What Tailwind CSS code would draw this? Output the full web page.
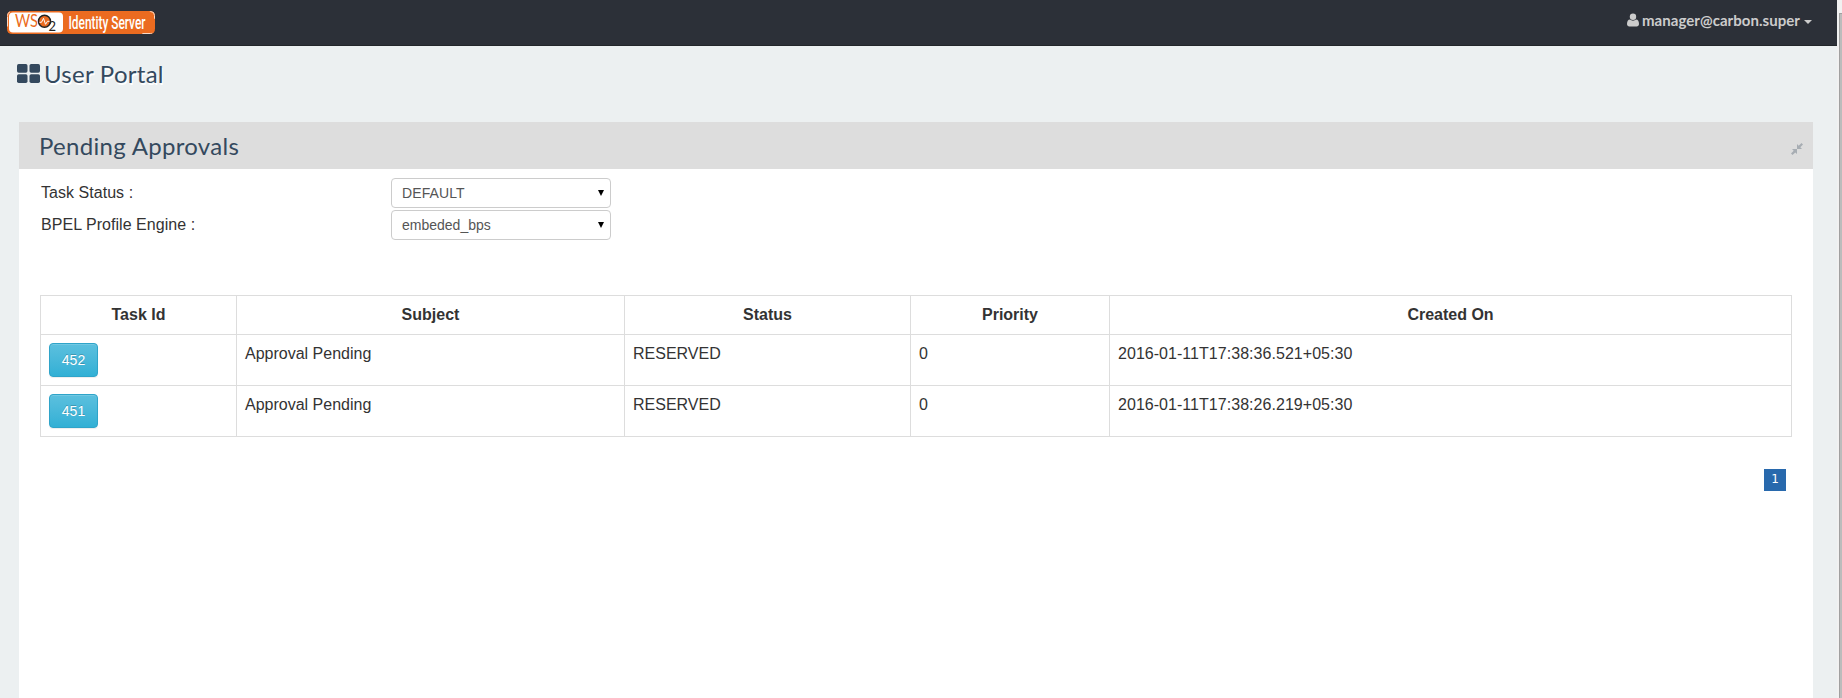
<!DOCTYPE html>
<html lang="en">
<head>
<meta charset="utf-8">
<title>User Portal</title>
<script src="https://cdn.jsdelivr.net/npm/@tailwindcss/browser@4"></script>
</head>
<body class="flex h-[698px] w-[1842px] overflow-hidden bg-[#ecf0f1] font-['Liberation_Sans',Arial,sans-serif] text-base leading-[22px] text-[#333333]">
<div class="flex w-[1837px] flex-col">
  <header class="flex h-[46px] shrink-0 items-start justify-between border-b border-[#22262a] bg-[#2c3038] pl-[7px] pr-[25px]">
    <svg class="mt-[11px] overflow-visible" width="148" height="23" viewBox="0 0 148 23">
      <rect x=".5" y=".5" width="147" height="22" rx="4" fill="#eb6b20" stroke="#eb6b20"/>
      <path d="M.5 5V4.500a4 4 0 0 1 4-4h139a4 4 0 0 1 4 4v14a4 4 0 0 1-4 4h-139a4 4 0 0 1-4-4z" fill="none" stroke="#fbd9c4" stroke-dasharray="5 140 10 15 10 140 10 15"/>
      <rect x="2" y="1.500" width="54" height="20" rx="4" fill="#fff"/>
      <text x="8" y="16" font-family="Lato, sans-serif" font-size="16.500" fill="#eb6b20" textLength="23" lengthAdjust="spacingAndGlyphs">WS</text>
      <circle cx="37.500" cy="10.300" r="6" fill="#eb6b20" stroke="#222" stroke-width="1.500"/>
      <path d="M32.500 11.300h2l2-4 2 6 2-3h2" fill="none" stroke="#fff"/>
      <text x="41.500" y="20" font-family="Lato, sans-serif" font-size="13" fill="#222">2</text>
      <text x="61.500" y="17.500" font-family="Roboto, sans-serif" font-size="17.500" font-weight="500" fill="#fff" textLength="77" lengthAdjust="spacingAndGlyphs">Identity Server</text>
    </svg>
    <div class="mt-[9px] flex items-center font-[Lato,sans-serif] text-[15px] font-bold leading-[22px] text-[#cccccc]">
      <svg class="mr-[3px]" width="12" height="14" viewBox="0 0 12 14" fill="#ccc"><path d="M3 6.500C1 6.500 0 8.500 0 11c0 1.500 1 2.500 2.300 2.500h7.400C11 13.500 12 12.500 12 11c0-2.500-1-4.500-3-4.500-.8.700-1.800 1.200-3 1.200s-2.200-.5-3-1.200z"/><circle cx="6" cy="3.700" r="3.200"/></svg>
      <span class="tracking-[0.05px]">manager@carbon.super</span>
      <svg class="ml-[4px] mt-[3px]" width="8" height="4" viewBox="0 0 8 4" fill="#ccc"><path d="M0 0h8L4 4z"/></svg>
    </div>
  </header>
  <h1 class="flex h-[76px] shrink-0 items-start pl-[17px] pt-[12px] font-[Lato,sans-serif] text-2xl leading-[31px] tracking-[0.27px] text-[#34495e] [text-shadow:1px_2px_0_#fff]">
    <svg class="mr-[4px] mt-[6px]" width="23" height="19" viewBox="0 0 23 19" fill="#34495e"><rect width="10.500" height="8.700" rx="1.700"/><rect x="12.500" width="10.500" height="8.700" rx="1.700"/><rect y="10.300" width="10.500" height="8.700" rx="1.700"/><rect x="12.500" y="10.300" width="10.500" height="8.700" rx="1.700"/></svg>
    User Portal
  </h1>
  <main class="ml-[19px] w-[1794px] grow bg-white">
    <div class="flex h-[47px] items-center justify-between bg-[#dddddd] pl-[20px] pr-[10px]">
      <h2 class="pb-[2px] pt-[2px] font-[Lato,sans-serif] text-2xl tracking-[0.3px] text-[#34495e]">Pending Approvals</h2>
      <svg class="mt-[7px]" width="12" height="12" viewBox="0 0 12 12" fill="#a7adb3"><path d="M1 6h5v5L4.300 9.400 1.500 12 0 10.500l2.700-2.800zM6 6V1l1.700 1.700L10.500 0 12 1.500 9.300 4.300 11 6z"/></svg>
    </div>
    <div class="px-[21px] pt-[9px]">
      <div class="grid grid-cols-[351px_220px] gap-y-[2px]">
        <label class="pl-px pt-[4px] tracking-[0.04px]">Task Status :</label>
        <div class="flex h-[30px] items-center justify-between rounded border border-[#cccccc] pl-[10px] pr-[6px] text-sm tracking-[0.1px] text-[#555555]"><span>DEFAULT</span><svg width="6" height="6" viewBox="0 0 6 6"><path d="M0 0h6L3 6z"/></svg></div>
        <label class="pl-px pt-[4px] tracking-[0.04px]">BPEL Profile Engine :</label>
        <div class="flex h-[30px] items-center justify-between rounded border border-[#cccccc] pl-[10px] pr-[6px] text-sm text-[#555555]"><span>embeded_bps</span><svg width="6" height="6" viewBox="0 0 6 6"><path d="M0 0h6L3 6z"/></svg></div>
      </div>
      <table class="mt-[55px] w-[1752px] table-fixed border-collapse">
        <colgroup><col class="w-[196px]"><col class="w-[388px]"><col class="w-[286px]"><col class="w-[199px]"><col class="w-[682px]"></colgroup>
        <thead>
          <tr class="h-[39px]"><th class="border border-[#dddddd]">Task Id</th><th class="border border-[#dddddd]">Subject</th><th class="border border-[#dddddd]">Status</th><th class="border border-[#dddddd]">Priority</th><th class="border border-[#dddddd]">Created On</th></tr>
        </thead>
        <tbody class="align-top">
          <tr class="h-[51px]">
            <td class="border border-[#dddddd] px-2 py-2"><a class="block h-[34px] w-[49px] rounded border border-[#2fa4c9] bg-linear-to-b from-[#5bc0de] to-[#31b0d5] text-center text-sm leading-[33px] text-white shadow-[inset_0_1px_0_rgba(255,255,255,.15),0_1px_1px_rgba(0,0,0,.075)] [text-shadow:0_-1px_0_rgba(0,0,0,.2)]">452</a></td>
            <td class="border border-[#dddddd] px-2 py-2">Approval Pending</td><td class="border border-[#dddddd] px-2 py-2">RESERVED</td><td class="border border-[#dddddd] px-2 py-2">0</td><td class="border border-[#dddddd] px-2 py-2 tracking-[0.04px]">2016-01-11T17:38:36.521+05:30</td>
          </tr>
          <tr class="h-[51px]">
            <td class="border border-[#dddddd] px-2 py-2"><a class="block h-[34px] w-[49px] rounded border border-[#2fa4c9] bg-linear-to-b from-[#5bc0de] to-[#31b0d5] text-center text-sm leading-[33px] text-white shadow-[inset_0_1px_0_rgba(255,255,255,.15),0_1px_1px_rgba(0,0,0,.075)] [text-shadow:0_-1px_0_rgba(0,0,0,.2)]">451</a></td>
            <td class="border border-[#dddddd] px-2 py-2">Approval Pending</td><td class="border border-[#dddddd] px-2 py-2">RESERVED</td><td class="border border-[#dddddd] px-2 py-2">0</td><td class="border border-[#dddddd] px-2 py-2 tracking-[0.04px]">2016-01-11T17:38:26.219+05:30</td>
          </tr>
        </tbody>
      </table>
      <div class="mt-[32px] flex justify-end pr-[6px]"><span class="h-[22px] w-[22px] bg-[#2869ad] text-center font-['DejaVu_Sans',sans-serif] text-xs leading-[20px] text-white">1</span></div>
    </div>
  </main>
</div>
<div class="w-[5px] bg-[#f1f1f1] pl-[2px] pt-[13px]"><div class="h-full border-l border-t border-[#a0a0a0] bg-[#bcbcbc]"></div></div>
</body>
</html>
